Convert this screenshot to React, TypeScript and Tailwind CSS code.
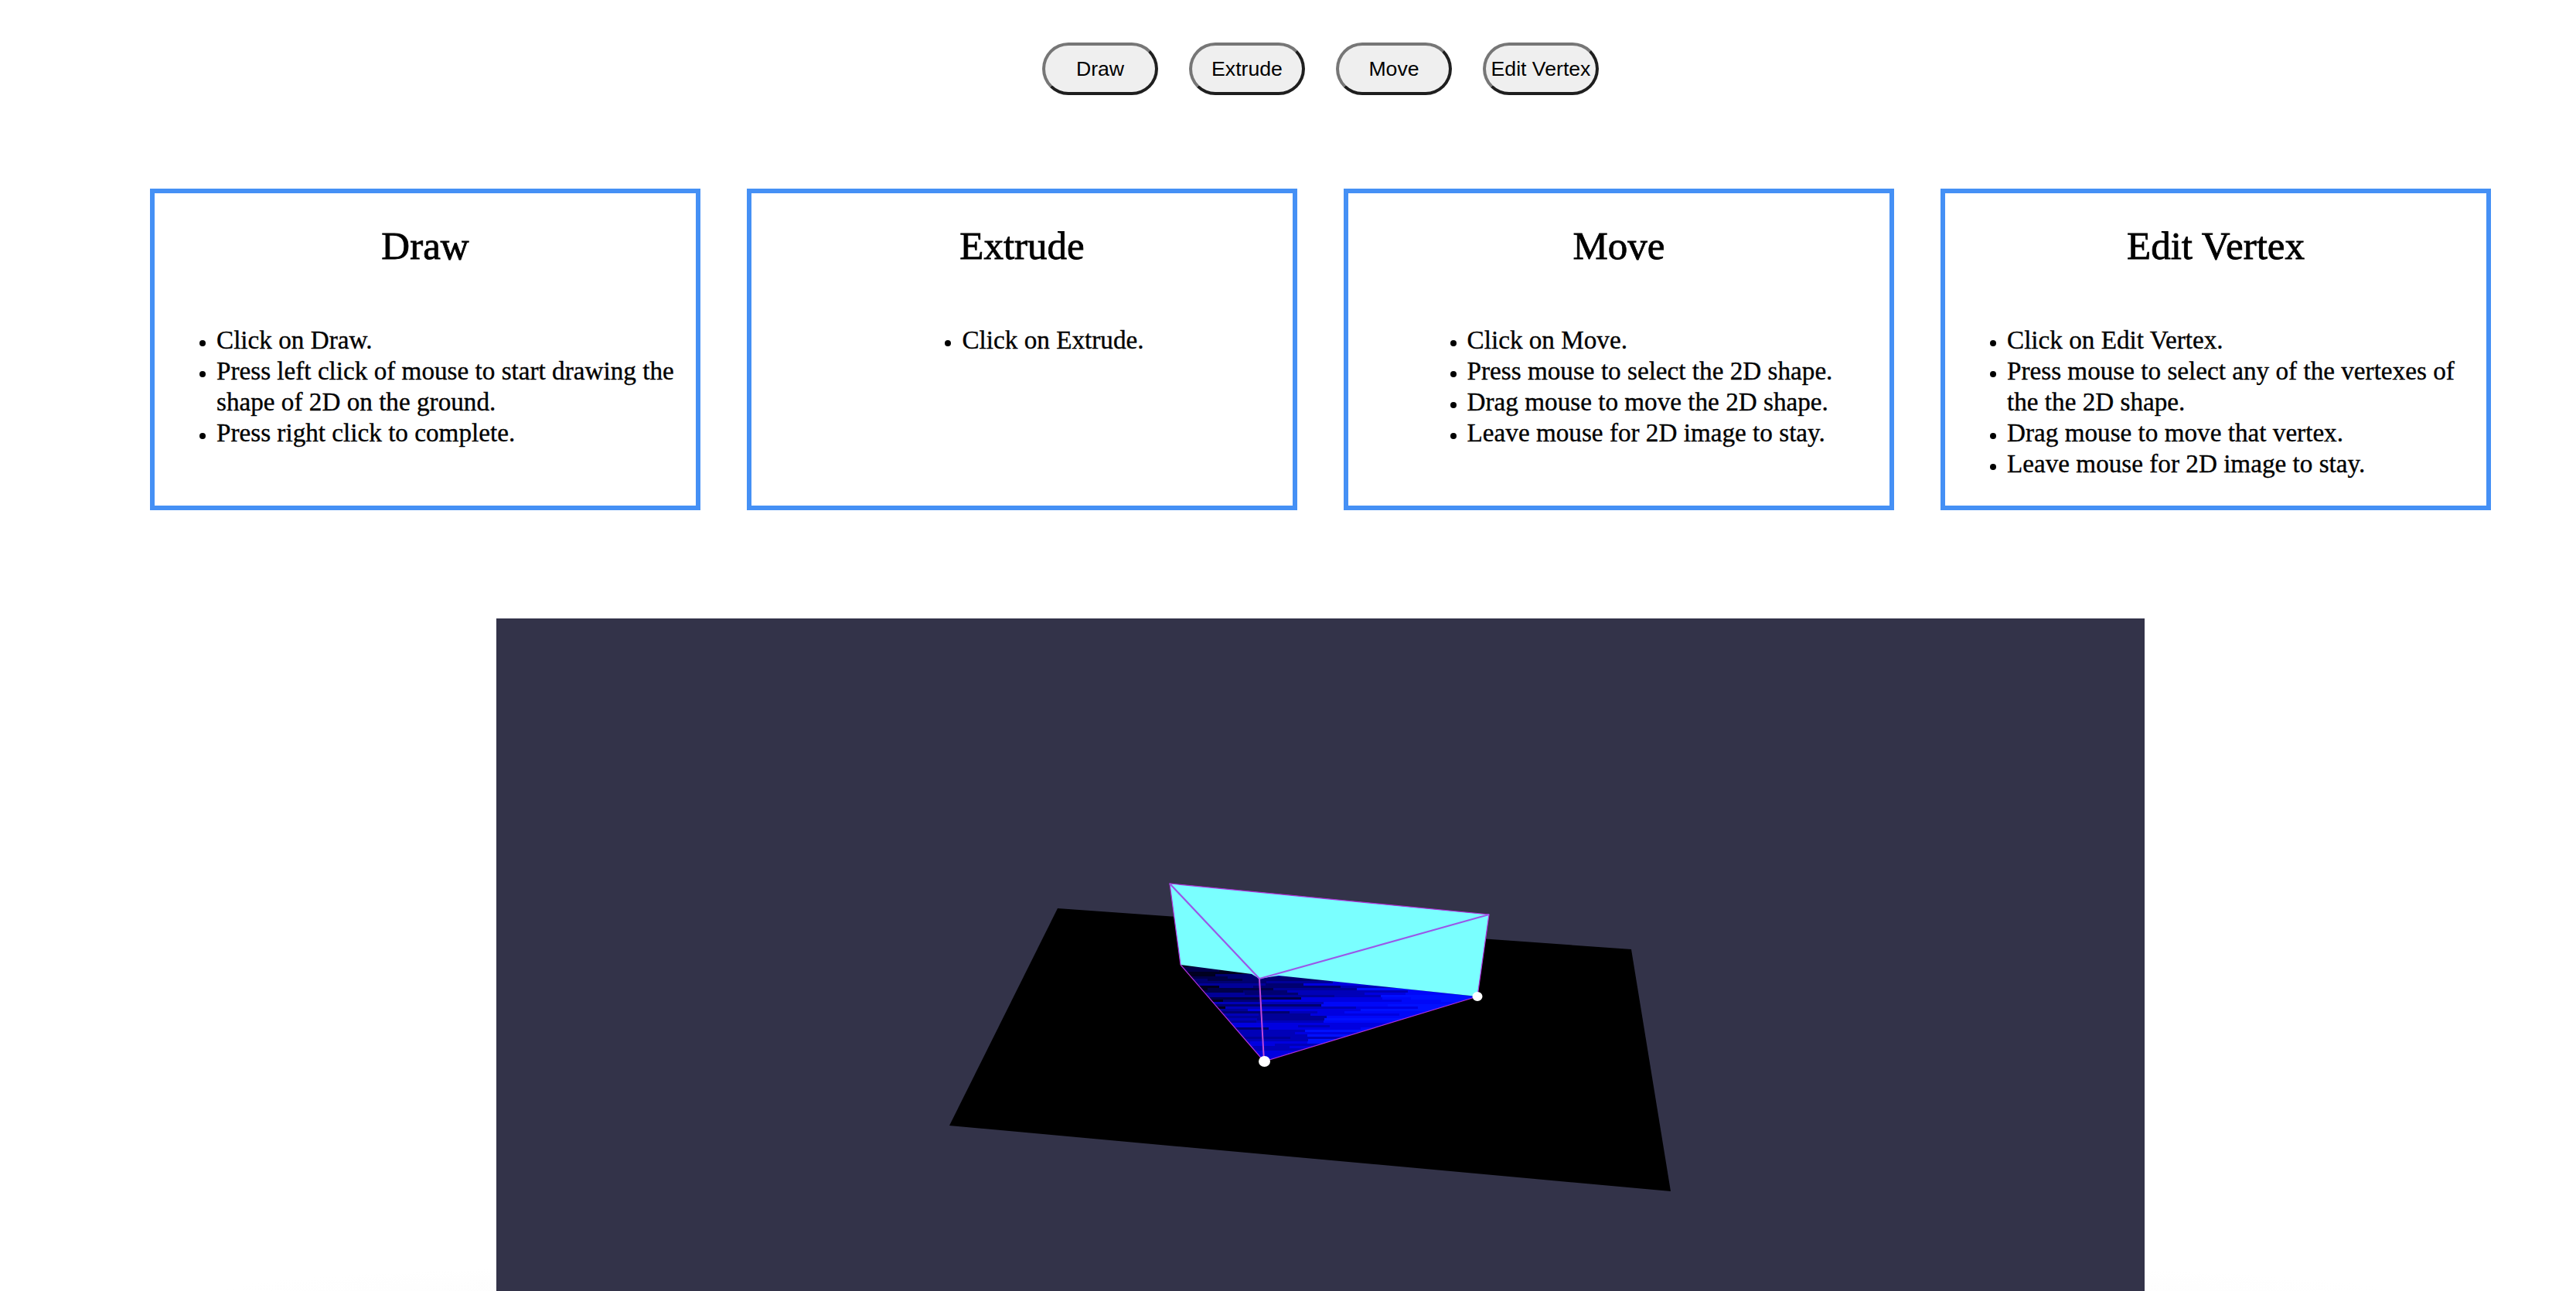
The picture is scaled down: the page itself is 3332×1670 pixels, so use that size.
const tools = ["Draw", "Extrude", "Move", "Edit Vertex"];

const cards = [
  {
    title: "Draw",
    steps: [
      "Click on Draw.",
      "Press left click of mouse to start drawing the shape of 2D on the ground.",
      "Press right click to complete.",
    ],
  },
  { title: "Extrude", steps: ["Click on Extrude."] },
  {
    title: "Move",
    steps: [
      "Click on Move.",
      "Press mouse to select the 2D shape.",
      "Drag mouse to move the 2D shape.",
      "Leave mouse for 2D image to stay.",
    ],
  },
  {
    title: "Edit Vertex",
    steps: [
      "Click on Edit Vertex.",
      "Press mouse to select any of the vertexes of the the 2D shape.",
      "Drag mouse to move that vertex.",
      "Leave mouse for 2D image to stay.",
    ],
  },
];

// z-fighting streaks on the bottom face of the extruded shape
function streaks() {
  const out: { x: number; y: number; w: number; fill: string }[] = [];
  const shades = ["#000020", "#000048", "#000070", "#000098", "#0000b8", "#0000e0", "#0008f8", "#0010ff"];
  let seed = 11;
  const rand = () => {
    seed = (seed * 16807) % 2147483647;
    return seed / 2147483647;
  };
  for (let y = 1248; y < 1376; y += 3) {
    let x = 1525 - rand() * 60;
    while (x < 1915) {
      const w = 35 + rand() * 90;
      const t = ((x + w / 2 - 1525) / 390) * 0.85 + ((y - 1248) / 125) * 0.5;
      const i = Math.max(0, Math.min(7, Math.round(t * 7 + (rand() - 0.5) * 3)));
      out.push({ x, y, w, fill: shades[i] });
      x += w;
    }
  }
  return out;
}

function Scene() {
  return (
    <svg viewBox="642 800 2132 870" className="block h-full w-full">
      <defs>
        <clipPath id="bottomFace">
          <polygon points="1527,1248 1911,1289 1635,1373" />
        </clipPath>
      </defs>
      <polygon points="1368,1175 2110,1228 2161,1541 1228,1456" fill="#000000" />
      <g clipPath="url(#bottomFace)" shapeRendering="crispEdges">
        {streaks().map((s, i) => (
          <rect key={i} x={s.x} y={s.y} width={s.w} height={3} fill={s.fill} />
        ))}
      </g>
      <polygon
        points="1513,1143 1926,1183 1911,1289 1654,1262 1629,1266 1619,1260 1527,1248"
        fill="#7affff"
      />
      <g fill="none" stroke="#b030d8" strokeWidth="1.2">
        <polyline points="1527,1248 1513,1143 1926,1183 1911,1289" />
        <polyline points="1527,1248 1635,1373 1911,1289" />
      </g>
      <g fill="none" stroke="#9a58e8" strokeWidth="2.2">
        <line x1="1513" y1="1143" x2="1629" y2="1266" />
        <line x1="1926" y1="1183" x2="1629" y2="1266" />
      </g>
      <line x1="1629" y1="1266" x2="1635" y2="1373" stroke="#c048d8" strokeWidth="2" />
      <ellipse cx="1635.5" cy="1373" rx="7.5" ry="7" fill="#ffffff" />
      <ellipse cx="1911" cy="1289" rx="6.5" ry="6" fill="#ffffff" />
    </svg>
  );
}

export default function App() {
  return (
    <div className="h-[1670px] w-full overflow-hidden bg-white bg-[radial-gradient(ellipse_1400px_44px_at_1685px_1670px,#f9f9f9,#ffffff)] pl-[84px] text-black">
      <div className="flex justify-center gap-10 pt-[55px]">
        {tools.map((t) => (
          <button
            key={t}
            className="flex h-[68px] w-[150px] items-center justify-center rounded-[34px] border-4 border-t-[#767676] border-l-[#767676] border-r-[#1f1f1f] border-b-[#1f1f1f] bg-[#efefef] font-['Liberation_Sans',sans-serif] text-[26.67px] whitespace-nowrap"
          >
            {t}
          </button>
        ))}
      </div>

      <div className="mx-auto mt-[121px] grid w-[3028px] grid-cols-4 gap-[60px] font-['Liberation_Serif',serif]">
        {cards.map((c) => (
          <div
            key={c.title}
            className="flex h-[416px] flex-col items-center border-[6px] border-[#4590f5] pt-10"
          >
            <h2 className="text-[51px] leading-[56px] [-webkit-text-stroke:0.8px_black]">{c.title}</h2>
            <ul className="mt-[74px] list-disc pl-20 text-[33.2px] leading-10 marker:text-[26px] [-webkit-text-stroke:0.35px_black]">
              {c.steps.map((s) => (
                <li key={s}>{s}</li>
              ))}
            </ul>
          </div>
        ))}
      </div>

      <div className="mx-auto mt-[140px] h-[870px] w-[2132px] bg-[#333349]">
        <Scene />
      </div>
    </div>
  );
}
